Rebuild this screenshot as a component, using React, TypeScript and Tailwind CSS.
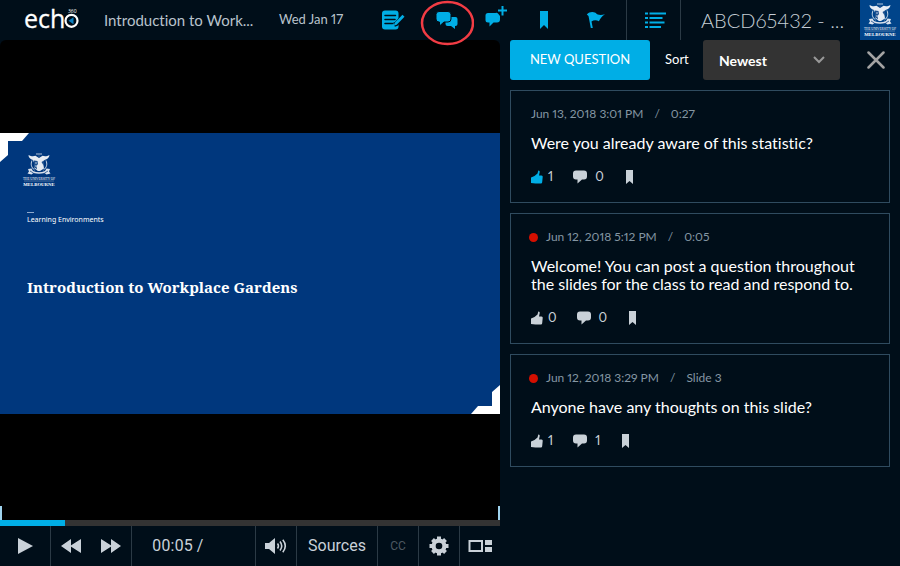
import type { ReactNode } from 'react';

interface Question {
  date: string;
  marker: string;
  text: string;
  unread: boolean;
  liked: boolean;
  likes: number;
  replies: number;
}

const questions: Question[] = [
  {
    date: 'Jun 13, 2018 3:01 PM',
    marker: '0:27',
    text: 'Were you already aware of this statistic?',
    unread: false,
    liked: true,
    likes: 1,
    replies: 0,
  },
  {
    date: 'Jun 12, 2018 5:12 PM',
    marker: '0:05',
    text: 'Welcome! You can post a question throughout the slides for the class to read and respond to.',
    unread: true,
    liked: false,
    likes: 0,
    replies: 0,
  },
  {
    date: 'Jun 12, 2018 3:29 PM',
    marker: 'Slide 3',
    text: 'Anyone have any thoughts on this slide?',
    unread: true,
    liked: false,
    likes: 1,
    replies: 1,
  },
];

function EchoLogo() {
  return (
    <svg viewBox="0 0 55 26" className="h-[26px] w-[55px] shrink-0 overflow-visible" aria-label="echo360">
      <text x="-1" y="20.500" fontSize="25" fill="#ffffff" stroke="#ffffff" strokeWidth="0.300" className="font-['Open_Sans']">ech</text>
      <circle cx="46.500" cy="13.800" r="6" fill="none" stroke="#ffffff" strokeWidth="2.200" />
      <path d="M48.500 10.300v7l-5-3.500z" fill="#0b7fc0" />
      <text x="43" y="5.500" fontSize="5" fill="#ffffff" className="font-['Open_Sans']">360</text>
    </svg>
  );
}

function UniversityLogo({ className }: { className: string }) {
  return (
    <svg viewBox="0 0 40 40" className={className} aria-label="The University of Melbourne">
      <g fill="#ffffff">
        <path d="M9.500 5c2.500 1.500 5 1.500 7 .8L20 8l3.500-2.200c2 .7 4.500.7 7-.8-.3 2.500-2 4.200-5 5l-1.500 2 1 6.500-4 2.500h-2L15.500 18.500l-.5-6-1-2.500C11 9 9.500 7.500 9.500 5z" opacity=".9" />
        <path d="M13 10.500c-1.500 3.500-.8 7 2.500 9.500M27 10.500c1.500 3.500.8 7-2.500 9.500" fill="none" stroke="#ffffff" strokeWidth=".8" />
        <path d="M9 19l3.500-.5L14 21c4 1.800 8 1.800 12 0l1.500-2.500 3.500.5-1 2.500 1.500 2-4 1-2-1.500c-3.500 1-7.500 1-11 0l-2 1.500-4-1 1.500-2z" opacity=".85" />
      </g>
      <path d="M15 10.500l3.500.5.5 3-1.500 2 .5 3.500-3-2.500z" fill="#1c4f8d" />
      <path d="M22.500 12l2.500-1.500-.5 5zM20 4.500l1.500 1.500-1.500 1.500-1.500-1.500z" fill="#1c4f8d" />
      <path d="M16 13h2M15.800 16h2" stroke="#ffffff" strokeWidth=".7" />
      <path d="M11 21l3.500 2M29 21l-3.500 2" stroke="#1c4f8d" strokeWidth=".8" />
      <path d="M17 4h6" stroke="#ffffff" strokeWidth=".7" />
      <text x="20" y="30" textAnchor="middle" fontSize="3.300" fill="#ffffff" className="font-['Liberation_Serif']">THE UNIVERSITY OF</text>
      <path d="M5 31h30" stroke="#ffffff" strokeWidth=".4" opacity=".7" />
      <text x="20" y="36" textAnchor="middle" fontSize="4.800" fontWeight="700" fill="#ffffff" className="font-['Liberation_Serif']">MELBOURNE</text>
    </svg>
  );
}

function NotesIcon() {
  return (
    <svg viewBox="0 0 24 20" className="h-5 w-6">
      <rect x="1" y="0.500" width="16.500" height="19" rx="3" fill="currentColor" />
      <path d="M4 5.500h10.500M4 9.500h10M4 13.500h7.500" stroke="#000e19" strokeWidth="1.500" strokeLinecap="round" />
      <path d="M22.800 6.200l-7.500 7.600-2.300 1" stroke="#000e19" strokeWidth="4.500" fill="none" />
      <path d="M21.500 4.800l2 2-7.800 8-3 1 1-3z" fill="currentColor" />
    </svg>
  );
}

function DiscussionIcon() {
  return (
    <svg viewBox="0 0 24 20" className="h-5 w-6">
      <path d="M12 7h8.500a2 2 0 0 1 2 2v5a2 2 0 0 1-2 2H20v3l-4-3h-3.500a2 2 0 0 1-2-2V9z" fill="currentColor" />
      <path d="M4 1.500h9a3 3 0 0 1 3 3v4.500a3 3 0 0 1-3 3H9L4.500 16v-4H4a3 3 0 0 1-3-3V4.500a3 3 0 0 1 3-3z" fill="currentColor" stroke="#000e19" strokeWidth="1" />
    </svg>
  );
}

function AddCommentIcon() {
  return (
    <svg viewBox="0 0 24 22" className="h-[22px] w-6">
      <path d="M5 8h7.500a2.500 2.500 0 0 1 2.500 0.500l2 2.500v3.500a3 3 0 0 1-3 3H10.500L6.500 21.500v-4H5a2.500 2.500 0 0 1-2.500-2.500v-4.500A2.500 2.500 0 0 1 5 8z" fill="currentColor" />
      <path d="M19.500 1v9.500M15 5.500h9" stroke="currentColor" strokeWidth="2" />
    </svg>
  );
}

function BookmarkIcon({ className }: { className: string }) {
  return (
    <svg viewBox="0 0 8 18" preserveAspectRatio="none" className={className}>
      <path d="M0 0h8v18l-4-4-4 4z" fill="currentColor" />
    </svg>
  );
}

function FlagIcon() {
  return (
    <svg viewBox="0 0 20 18" className="h-[18px] w-5">
      <path d="M.8 3.500C3.500.8 6.500.500 9.500 1.800c2 2.500 5.500 2.500 9.500 1.500-3.300 1.800-4.600 4.500-6.100 7-2.400-1.300-5.200-1.300-7.400.2l1.300 6.500H4.800L2.500 5z" fill="currentColor" />
    </svg>
  );
}

function ListIcon() {
  return (
    <svg viewBox="0 0 22 16" className="ml-1 h-4 w-[22px]" stroke="currentColor" strokeWidth="1.800">
      <path d="M0 1.500h3M0 6h3M0 10.500h3M0 15h3M4.500 1.500H21M4.500 6h13M4.500 10.500h15M4.500 15H16" />
    </svg>
  );
}

function ThumbIcon() {
  return (
    <svg viewBox="0 0 12 14" className="h-[14px] w-3">
      <path d="M0 7.500L3.500 6l3-2.500L7.300.5C8.800.5 9 1.800 8.500 3L8 5.500h2.500c1 0 1.300.8 1.200 1.500l-.5 5c-.1 1-.7 1.500-1.700 1.500H4.500L0 13z" fill="currentColor" />
    </svg>
  );
}

function BubbleIcon() {
  return (
    <svg viewBox="0 0 14 14" className="h-[14px] w-[14px]">
      <path d="M3 .5h8a3 3 0 0 1 3 3v3a3 3 0 0 1-3 3H9L4.500 13.500v-4H3a3 3 0 0 1-3-3v-3a3 3 0 0 1 3-3z" fill="currentColor" />
    </svg>
  );
}

function HeaderButton({ label, className, children }: { label: string; className: string; children: ReactNode }) {
  return (
    <button aria-label={label} className={`relative flex h-10 items-center justify-center text-[#00aee6] ${className}`}>
      {children}
    </button>
  );
}

function Header() {
  return (
    <header className="flex h-10 items-center">
      <div className="flex min-w-0 flex-1 items-center pl-[25px]">
        <EchoLogo />
        <h1 className="ml-6 w-[175px] truncate text-[15px] text-[#b9c3cc]">Introduction to Work...</h1>
        <span className="whitespace-nowrap text-[13px] text-[#b9c3cc]">Wed Jan 17</span>
      </div>
      <nav className="flex items-center pr-[6px]">
        <HeaderButton label="Notes" className="w-[54px]"><NotesIcon /></HeaderButton>
        <HeaderButton label="Discussion" className="w-[54px]">
          <DiscussionIcon />
          <svg viewBox="0 0 54 46" className="pointer-events-none absolute left-0 top-0 z-10 h-[46px] w-[54px]">
            <ellipse cx="27.500" cy="23" rx="25.500" ry="21" fill="none" stroke="#f23c44" strokeWidth="2.500" />
          </svg>
        </HeaderButton>
        <HeaderButton label="Ask a question" className="w-[42px] pb-2"><AddCommentIcon /></HeaderButton>
        <HeaderButton label="Bookmark" className="w-14"><BookmarkIcon className="h-[18px] w-2" /></HeaderButton>
        <HeaderButton label="Flag as confusing" className="w-12"><FlagIcon /></HeaderButton>
      </nav>
      <HeaderButton label="Class list" className="w-[55px] border-x border-[#2b3a45]"><ListIcon /></HeaderButton>
      <span className="w-[179px] pl-5 text-[20px] font-light text-[#c5ced6]">ABCD65432 - ...</span>
      <UniversityLogo className="h-10 w-10 bg-[#00448a]" />
    </header>
  );
}

function Slide() {
  return (
    <section className="relative aspect-[500/281] w-full bg-[#00377d] text-white">
      <svg viewBox="0 0 29 29" className="absolute left-0 top-0 h-[29px] w-[29px]">
        <path d="M0 0h29l-7 8H8v14l-8 7z" fill="#ffffff" />
      </svg>
      <svg viewBox="0 0 29 29" className="absolute bottom-0 right-0 h-[29px] w-[29px]">
        <path d="M29 29H0l7-8h14V7l8-7z" fill="#ffffff" />
      </svg>
      <div className="flex flex-col pl-[27px] pt-[17px]">
        <UniversityLogo className="-ml-2 h-10 w-10" />
        <div className="mt-[22px] w-[7px] border-t border-[#8fa9cc]" />
        <p className="text-[7px] leading-[14px] font-['Noto_Sans',sans-serif]">Learning Environments</p>
        <h2 className="mt-12 text-[15px] leading-6 font-bold font-['Noto_Serif','DejaVu_Serif_Condensed','Liberation_Serif',serif]">
          Introduction to Workplace Gardens
        </h2>
      </div>
    </section>
  );
}

function PlayerControls() {
  return (
    <div className="flex h-10 text-[#c9d1d8] [&>*+*]:border-l [&>*+*]:border-[#2b3a45]">
      <button aria-label="Play" className="flex w-[50px] items-center justify-center">
        <svg viewBox="0 0 15 16" className="h-4 w-[15px]"><path d="M0 0l15 8-15 8z" fill="currentColor" /></svg>
      </button>
      <div className="flex w-[81px]">
        <button aria-label="Rewind" className="flex flex-1 items-center justify-center">
          <svg viewBox="0 0 20 14" className="h-[14px] w-5"><path d="M10 0v14L0 7zM20 0v14L9 7z" fill="currentColor" /></svg>
        </button>
        <button aria-label="Fast forward" className="flex flex-1 items-center justify-center">
          <svg viewBox="0 0 20 14" className="h-[14px] w-5"><path d="M0 0l11 7-11 7zM10 0l10 7-10 7z" fill="currentColor" /></svg>
        </button>
      </div>
      <div className="flex flex-1 items-center pl-5 text-[16px]">00:05 /</div>
      <button aria-label="Volume" className="flex w-[41px] items-center justify-center">
        <svg viewBox="0 0 22 16" className="h-4 w-[22px]">
          <path d="M0 5h4l6-5v16l-6-5H0z" fill="currentColor" />
          <path d="M12.500 5.500q1.800 2.500 0 5M15 3.500q3.500 4.500 0 9M17.800 1.800q5 6.200 0 12.400" fill="none" stroke="currentColor" strokeWidth="1.600" />
        </svg>
      </button>
      <button className="w-[81px] text-[16px]">Sources</button>
      <button className="w-[41px] text-[12px] text-[#4d5861]">CC</button>
      <button aria-label="Settings" className="flex w-[41px] items-center justify-center">
        <svg viewBox="0 0 20 20" className="h-5 w-5">
          <g stroke="currentColor" strokeWidth="4">
            <path d="M10 .5v19M.5 10h19M3.500 3.500l13 13M16.500 3.500l-13 13" />
          </g>
          <circle cx="10" cy="10" r="7.500" fill="currentColor" />
          <circle cx="10" cy="10" r="3.300" fill="#000e19" />
        </svg>
      </button>
      <button aria-label="Layout" className="flex w-[41px] items-center justify-center">
        <svg viewBox="0 0 24 14" className="h-[14px] w-6">
          <rect x="1.500" y="2" width="12.500" height="10" fill="none" stroke="currentColor" strokeWidth="2" />
          <path d="M17 1h7v5h-7zM17 8h7v5h-7z" fill="currentColor" />
        </svg>
      </button>
    </div>
  );
}

function Player() {
  return (
    <main className="flex min-w-0 flex-col overflow-hidden rounded-md bg-[#000e19] font-['Roboto',sans-serif]">
      <div className="flex flex-1 flex-col justify-center bg-black">
        <Slide />
      </div>
      <div className="flex h-[14px] justify-between bg-black">
        <span className="w-[2px] bg-[#9fd3ee]" />
        <span className="w-[2px] bg-[#9fd3ee]" />
      </div>
      <div className="h-[6px] bg-[#333333]">
        <div className="h-full w-[13%] bg-[#00aee6]" />
      </div>
      <PlayerControls />
    </main>
  );
}

function QuestionCard({ question }: { question: Question }) {
  return (
    <article className="border border-[#2f4b5f] px-5 pb-[17px] pt-[15px]">
      <p className="flex items-center text-[12px] leading-4 text-[#8496a3]">
        {question.unread && <span className="-ml-[2px] mr-2 h-[9px] w-[9px] rounded-full bg-[#d40f00]" />}
        <span>{question.date}</span>
        <span className="mx-[11px]">/</span>
        <span>{question.marker}</span>
      </p>
      <p className="mt-3 text-[16px] leading-[18px] text-white">{question.text}</p>
      <div className="mt-[17px] flex h-4 items-center text-[13px] text-[#c9d1d8]">
        <button className="flex items-center gap-[5px]" aria-label="Like">
          <span className={question.liked ? 'text-[#00aee6]' : ''}><ThumbIcon /></span>
          {question.likes}
        </button>
        <button className="ml-5 flex items-center gap-2" aria-label="Replies">
          <BubbleIcon />
          {question.replies}
        </button>
        <button className="ml-[22px]" aria-label="Bookmark"><BookmarkIcon className="h-[14px] w-[7px]" /></button>
      </div>
    </article>
  );
}

function QuestionPanel() {
  return (
    <aside className="min-w-0 px-[10px]">
      <div className="flex h-10 items-center">
        <button className="h-10 w-[140px] rounded-[3px] bg-[#00aee6] text-[13px] text-white">NEW QUESTION</button>
        <label htmlFor="sort" className="ml-[15px] w-[38px] text-[13px] text-white">Sort</label>
        <div className="relative">
          <select id="sort" className="h-10 w-[137px] appearance-none rounded-[3px] bg-[#333333] px-4 text-[14px] font-bold text-white">
            <option>Newest</option>
            <option>Oldest</option>
          </select>
          <svg viewBox="0 0 12 8" className="pointer-events-none absolute right-[15px] top-4 h-2 w-3">
            <path d="M1 1l5 5 5-5" fill="none" stroke="#999999" strokeWidth="2" />
          </svg>
        </div>
        <button aria-label="Close" className="ml-auto mr-[5px]">
          <svg viewBox="0 0 18 18" className="h-[18px] w-[18px]">
            <path d="M1.500 1.500l15 15M16.500 1.500l-15 15" stroke="#a3a3a3" strokeWidth="2.500" strokeLinecap="round" />
          </svg>
        </button>
      </div>
      <div className="mt-[10px] flex flex-col gap-[10px]">
        {questions.map((question) => (
          <QuestionCard key={question.date} question={question} />
        ))}
      </div>
    </aside>
  );
}

export default function App() {
  return (
    <div className="flex min-h-screen flex-col bg-[#000e19] font-['Lato',sans-serif] proportional-nums [font-variant-ligatures:none]">
      <Header />
      <div className="grid flex-1 grid-cols-[5fr_4fr]">
        <Player />
        <QuestionPanel />
      </div>
    </div>
  );
}
